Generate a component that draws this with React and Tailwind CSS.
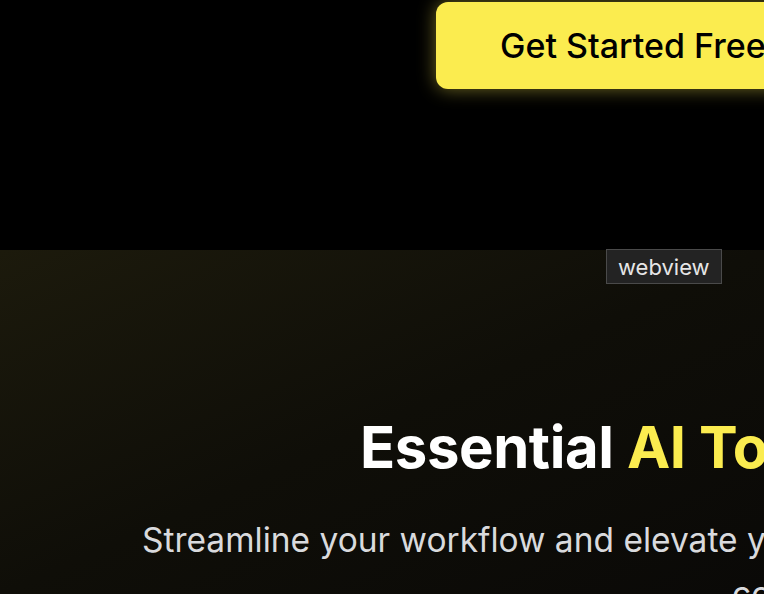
export default function App() {
  return (
    <div className="w-[764px] h-[594px] overflow-hidden bg-black font-['Inter','Noto_Sans',sans-serif]">
      {/* top band with call to action */}
      <section className="h-[250px] bg-black pt-[2px] pl-[436px]">
        <button className="w-[420px] h-[87px] rounded-[12px] bg-[#fbec4f] text-black text-[34px] font-medium text-left pl-[64px] whitespace-nowrap shadow-[0_0_18px_rgba(251,236,79,0.45)]">
          Get Started Free
        </button>
      </section>

      {/* hero */}
      <section className="relative h-[344px] bg-gradient-to-br from-[#1c1a0c] via-[#0f0e08] to-[#0a0907]">
        <div className="absolute left-[606px] top-[-1px] px-[11px] h-[35px] flex items-center bg-[#232323] border border-[#4a4a4a] text-[22px] text-[#e6e6e6] leading-none">
          webview
        </div>
        <div className="pt-[161px]">
          <h1 className="pl-[360px] text-[58px] font-bold leading-[72px] text-white whitespace-nowrap tracking-[-0.4px]">
            Essential <span className="text-[#fbec4f]">AI Tools</span>
          </h1>
          <p className="mt-[30px] pl-[142px] text-[33.5px] leading-[54px] text-[#d9dadd] whitespace-nowrap">
            Streamline your workflow and elevate your
          </p>
          <p className="pl-[732px] text-[33.5px] leading-[54px] text-[#d9dadd] whitespace-nowrap">
            co
          </p>
        </div>
      </section>
    </div>
  );
}
